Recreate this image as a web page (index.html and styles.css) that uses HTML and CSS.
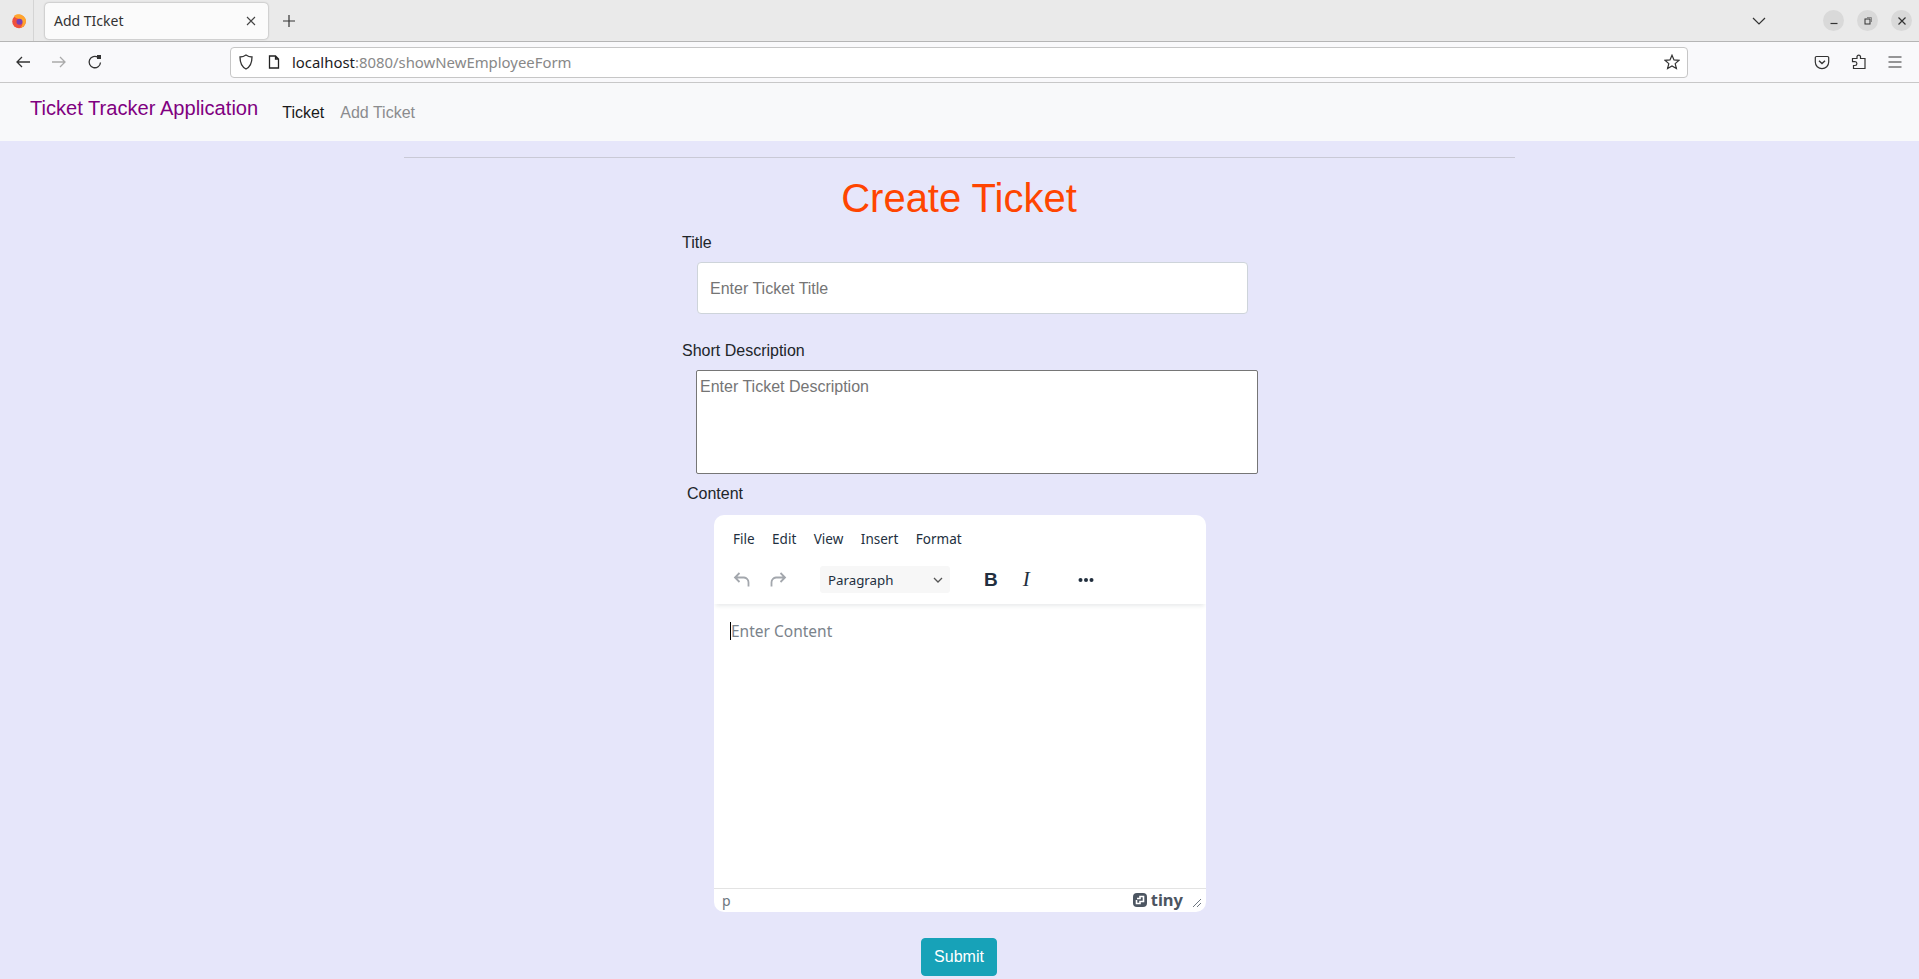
FILE: index.html
```html
<!DOCTYPE html>
<html lang="en">
<head>
    <meta charset="UTF-8">
    <meta name="viewport" content="width=device-width, initial-scale=1.0">
    <title>Add TIcket</title>
    <link rel="stylesheet" href="styles.css">
</head>
<body>
    <!-- Browser chrome -->
    <div class="tabstrip">
        <div class="tab-logo">
            <svg width="16" height="16" viewBox="0 0 16 16"><circle cx="8" cy="8.5" r="6.8" fill="#f0503c"/><path d="M3 3 C6 0 13 1 15 7 C15 11 13 14 9 15 C13 12 12 7 8 6 C6 5.500 4 5 3 3Z" fill="#ffa52e"/><circle cx="8.500" cy="8.800" r="3" fill="#7a3fb5"/></svg>
        </div>
        <div class="tab">
            <span class="tab-title">Add TIcket</span>
            <svg class="tab-close" width="10" height="10" viewBox="0 0 10 10"><path d="M1 1 L9 9 M9 1 L1 9" stroke="#444" stroke-width="1.100" fill="none"/></svg>
        </div>
        <svg class="tab-new" width="14" height="14" viewBox="0 0 14 14"><path d="M7 1 V13 M1 7 H13" stroke="#333" stroke-width="1.200" fill="none"/></svg>
        <div class="tabstrip-right">
            <svg class="tab-list" width="14" height="8" viewBox="0 0 14 8"><path d="M1 1 L7 7 L13 1" stroke="#333" stroke-width="1.200" fill="none"/></svg>
            <div class="win-btn"><svg width="10" height="10" viewBox="0 0 10 10"><path d="M1.500 7.500 H8.500" stroke="#333" stroke-width="1.200"/></svg></div>
            <div class="win-btn"><svg width="10" height="10" viewBox="0 0 10 10"><rect x="2" y="3" width="5" height="5" stroke="#333" fill="none"/><path d="M4 1.500 H8.500 V6" stroke="#888" fill="none"/></svg></div>
            <div class="win-btn"><svg width="10" height="10" viewBox="0 0 10 10"><path d="M1.500 1.500 L8.500 8.500 M8.500 1.500 L1.500 8.500" stroke="#333" stroke-width="1.200"/></svg></div>
        </div>
    </div>
    <div class="toolbar">
        <svg class="tool-icon" width="16" height="16" viewBox="0 0 16 16"><path d="M15 8 H2 M7 3 L2 8 L7 13" stroke="#333" stroke-width="1.300" fill="none"/></svg>
        <svg class="tool-icon" width="16" height="16" viewBox="0 0 16 16"><path d="M1 8 H14 M9 3 L14 8 L9 13" stroke="#aaa" stroke-width="1.300" fill="none"/></svg>
        <svg class="tool-icon" width="16" height="16" viewBox="0 0 16 16"><path d="M13.500 8.500 A5.700 5.700 0 1 1 11 3.300" stroke="#333" stroke-width="1.300" fill="none"/><path d="M10 1 H14 V5 H10Z" fill="#333"/></svg>
        <div class="urlbar">
            <svg width="14" height="16" viewBox="0 0 14 16"><path d="M7 1 C9 2.500 11 3 13 3 C13 9 11 13 7 15 C3 13 1 9 1 3 C3 3 5 2.500 7 1Z" stroke="#333" stroke-width="1.300" fill="none"/></svg>
            <svg class="url-page" width="12" height="14" viewBox="0 0 12 14"><path d="M1.500 1 H7.500 L10.500 4 V13 H1.500Z M7.500 1 V4 H10.500" stroke="#222" stroke-width="1.300" fill="none"/></svg>
            <span class="url-text"><span class="url-host">localhost</span>:8080/showNewEmployeeForm</span>
            <svg class="url-star" width="16" height="16" viewBox="0 0 16 16"><path d="M8 1.200 L10 5.900 L15 6.300 L11.200 9.600 L12.400 14.600 L8 11.900 L3.600 14.600 L4.800 9.600 L1 6.300 L6 5.900Z" stroke="#333" stroke-width="1.200" fill="none"/></svg>
        </div>
        <div class="tool-right">
            <svg width="16" height="15" viewBox="0 0 16 15"><path d="M2.500 1.500 H13.500 A1.200 1.200 0 0 1 14.700 2.700 V7 A6.700 6.700 0 0 1 1.300 7 V2.700 A1.200 1.200 0 0 1 2.500 1.500Z" stroke="#333" stroke-width="1.200" fill="none"/><path d="M5 5.800 L8 8.500 L11 5.800" stroke="#333" stroke-width="1.400" fill="none"/></svg>
            <svg width="16" height="16" viewBox="0 0 16 16"><path d="M6 2.500 A1.800 1.800 0 0 1 9.500 2.500 V4.500 H14 V14.500 H2.500 V11.500 H4 A1.900 1.900 0 0 0 4 7.700 H1.500 V4.500 H6Z" stroke="#333" stroke-width="1.200" fill="none"/></svg>
            <svg width="14" height="12" viewBox="0 0 14 12"><path d="M0.500 1 H13.500 M0.500 6 H13.500 M0.500 11 H13.500" stroke="#333" stroke-width="1.200"/></svg>
        </div>
    </div>

    <!-- Page -->
    <nav class="navbar">
        <a class="brand" href="#">Ticket Tracker Application</a>
        <a class="nav-link active" href="#">Ticket</a>
        <a class="nav-link" href="#">Add Ticket</a>
    </nav>
    <main class="container">
        <hr class="divider">
        <h1 class="page-title">Create Ticket</h1>
        <form class="ticket-form">
            <div class="fields">
                <label class="lbl">Title</label>
                <input class="title-input" type="text" placeholder="Enter Ticket Title">
                <label class="lbl lbl-desc">Short Description</label>
                <textarea class="desc-input" placeholder="Enter Ticket Description"></textarea>
                <label class="lbl lbl-content">Content</label>
                <div class="editor">
                    <div class="menubar">
                        <span>File</span><span>Edit</span><span>View</span><span>Insert</span><span>Format</span>
                    </div>
                    <div class="editor-tools">
                        <svg class="undo" width="20" height="20" viewBox="0 0 20 20"><path d="M7.500 3 L3 7.500 L7.500 12 M3.500 7.500 H12 A5 5 0 0 1 16.500 12.500 V16.500" stroke="#a3a7ad" stroke-width="1.800" fill="none"/></svg>
                        <svg class="redo" width="20" height="20" viewBox="0 0 20 20"><path d="M12.500 3 L17 7.500 L12.500 12 M16.500 7.500 H8 A5 5 0 0 0 3.500 12.500 V16.500" stroke="#a3a7ad" stroke-width="1.800" fill="none"/></svg>
                        <div class="block-select">
                            <span>Paragraph</span>
                            <svg width="10" height="6" viewBox="0 0 10 6"><path d="M1 1 L5 5 L9 1" stroke="#555" stroke-width="1.300" fill="none"/></svg>
                        </div>
                        <span class="tool-bold">B</span>
                        <span class="tool-italic">I</span>
                        <svg class="tool-more" width="16" height="4" viewBox="0 0 16 4"><circle cx="2.500" cy="2" r="2" fill="#222f3e"/><circle cx="8" cy="2" r="2" fill="#222f3e"/><circle cx="13.500" cy="2" r="2" fill="#222f3e"/></svg>
                    </div>
                    <div class="editor-body">
                        <span class="caret"></span><span class="editor-placeholder">Enter Content</span>
                    </div>
                    <div class="statusbar">
                        <span class="path">p</span>
                        <svg class="tiny-logo" width="16" height="16" viewBox="0 0 16 16"><path d="M5 1 H11 A4 4 0 0 1 15 5 V11 A4 4 0 0 1 11 15 H5 A4 4 0 0 1 1 11 V5 A4 4 0 0 1 5 1Z" fill="#4c5561"/><path d="M5 6.500 H8 V4.500 H11.500 V9.500 H8 V11.500 H4.500 V8" stroke="#fff" stroke-width="1.600" fill="none"/></svg>
                        <span class="tiny-word">tiny</span>
                        <svg class="resize" width="10" height="10" viewBox="0 0 10 10"><path d="M1 9 L9 1 M5 9 L9 5" stroke="#6d7680" stroke-width="1"/></svg>
                    </div>
                </div>
            </div>
            <button class="submit-btn" type="button">Submit</button>
        </form>
    </main>
</body>
</html>
```

FILE: styles.css
```css
html, body {
    margin: 0;
    height: 979px;
    overflow: hidden;
}
body {
    background-color: #e6e6fa;
    font-family: "Liberation Sans", Arial, sans-serif;
    color: #212529;
}
svg {
    display: block;
    flex: none;
}

/* browser chrome */
.tabstrip {
    height: 41px;
    background-color: #eaeaea;
    border-bottom: 1px solid #b5b5b5;
    display: flex;
    align-items: center;
    font-family: "Noto Sans", sans-serif;
}
.tab-logo {
    width: 34px;
    height: 41px;
    border-right: 1px solid #d4d4d4;
    display: flex;
    align-items: center;
    padding-left: 11px;
    box-sizing: border-box;
}
.tab {
    width: 223px;
    height: 36px;
    margin-left: 11px;
    background-color: #fbfbfb;
    border-radius: 4px;
    box-shadow: 0 0 2px rgba(0, 0, 0, 0.4);
    display: flex;
    align-items: center;
    justify-content: space-between;
    padding: 0 12px 0 9px;
    box-sizing: border-box;
}
.tab-title {
    font-size: 14px;
    color: #333;
}
.tab-new {
    margin-left: 14px;
}
.tabstrip-right {
    margin-left: auto;
    display: flex;
    align-items: center;
    padding-right: 7px;
}
.tab-list {
    margin-right: 44px;
}
.win-btn {
    width: 21px;
    height: 21px;
    border-radius: 50%;
    background-color: #d9d9d9;
    display: flex;
    align-items: center;
    justify-content: center;
    margin-left: 13px;
}
.toolbar {
    height: 40px;
    background-color: #f9f9fb;
    border-bottom: 1px solid #c8c8c8;
    display: flex;
    align-items: center;
    padding-left: 15px;
}
.tool-icon {
    margin-right: 20px;
}
.urlbar {
    width: 1458px;
    height: 31px;
    margin-left: 107px;
    box-sizing: border-box;
    background-color: #fff;
    border: 1px solid #c6c6c6;
    border-radius: 4px;
    display: flex;
    align-items: center;
    padding: 0 7px 0 8px;
}
.url-page {
    margin-left: 15px;
}
.url-text {
    margin-left: 12px;
    font-family: "Noto Sans", sans-serif;
    font-size: 14.9px;
    color: #888;
}
.url-host {
    color: #1c1b22;
}
.url-star {
    margin-left: auto;
}
.tool-right {
    margin-left: auto;
    display: flex;
    align-items: center;
    gap: 21px;
    padding-right: 17px;
}

/* page */
.navbar {
    height: 58px;
    background-color: #f8f9fa;
    display: flex;
    align-items: center;
    padding-left: 30px;
}
.brand {
    font-size: 20.1px;
    color: #800080;
    text-decoration: none;
    margin-right: 24px;
    margin-bottom: 8px;
}
.nav-link {
    font-size: 16px;
    color: #8b8c8e;
    text-decoration: none;
    margin-right: 16px;
    margin-top: 2px;
}
.nav-link.active {
    color: #1a1a1a;
}
.container {
    width: 1111px;
    margin: 0 auto;
    padding-top: 16px;
}
.divider {
    margin: 0;
    border: 0;
    border-top: 1px solid #c9c9d6;
}
.page-title {
    margin: 16px 0 0;
    padding-right: 1px;
    text-align: center;
    font-size: 40px;
    font-weight: 400;
    line-height: 48px;
    color: #ff4500;
}
.ticket-form {
    width: 709px;
    margin: 0 auto;
    display: flex;
    flex-direction: column;
}
.fields {
    display: flex;
    flex-direction: column;
    align-items: flex-start;
    padding-left: 77px;
}
.lbl {
    font-size: 16px;
    line-height: 24px;
    margin-top: 9px;
}
.title-input {
    width: 551px;
    height: 52px;
    box-sizing: border-box;
    margin: 7px 0 0 15px;
    padding: 8px 12px 6px;
    font-family: inherit;
    font-size: 16px;
    border: 1px solid #ced4da;
    border-radius: 4px;
    background-color: #fff;
}
.title-input::placeholder,
.desc-input::placeholder {
    color: #757575;
    opacity: 1;
}
.lbl-desc {
    margin-top: 25px;
}
.desc-input {
    width: 562px;
    height: 104px;
    box-sizing: border-box;
    margin: 7px 0 0 14px;
    padding: 4px 3px 2px;
    font-family: inherit;
    font-size: 16px;
    line-height: 24px;
    border: 1px solid #767676;
    border-radius: 2px;
    resize: none;
    display: block;
}
.lbl-content {
    margin: 8px 0 0 5px;
}
.editor {
    width: 492px;
    height: 397px;
    margin: 9px 0 0 32px;
    background-color: #fff;
    border-radius: 10px;
    display: flex;
    flex-direction: column;
    overflow: hidden;
    font-family: "Noto Sans", sans-serif;
    color: #222f3e;
}
.menubar {
    display: flex;
    gap: 17.5px;
    height: 48px;
    align-items: center;
    padding: 0 0 0 19px;
    font-size: 13.5px;
}
.editor-tools {
    height: 41px;
    box-sizing: border-box;
    padding: 0 0 8px 18px;
    display: flex;
    align-items: center;
    box-shadow: 0 4px 4px -2px rgba(34, 47, 62, 0.1);
    position: relative;
}
.redo {
    margin-left: 16px;
}
.block-select {
    width: 130px;
    height: 27px;
    margin-left: 32px;
    background-color: #f7f7f7;
    border-radius: 3px;
    display: flex;
    align-items: center;
    justify-content: space-between;
    padding: 0 7px 0 8px;
    box-sizing: border-box;
    font-size: 13.3px;
}
.tool-bold {
    margin-left: 34px;
    font-family: "Liberation Sans", sans-serif;
    font-weight: 700;
    font-size: 19px;
}
.tool-italic {
    margin-left: 25px;
    font-family: "Liberation Serif", serif;
    font-style: italic;
    font-size: 21px;
}
.tool-more {
    margin-left: 48px;
}
.editor-body {
    flex: 1;
    display: flex;
    align-items: flex-start;
    padding: 16px 0 0 16px;
}
.caret {
    width: 1px;
    height: 18px;
    background-color: #000;
    margin-top: 2px;
}
.editor-placeholder {
    font-size: 15.5px;
    line-height: 22px;
    color: #7b838b;
}
.statusbar {
    height: 24px;
    box-sizing: border-box;
    border-top: 1px solid #e3e3e3;
    display: flex;
    align-items: center;
    padding: 0 4px 1px 8px;
}
.path {
    font-size: 14px;
    color: #6d7680;
    margin-right: auto;
}
.tiny-word {
    margin-left: 3px;
    font-size: 16.5px;
    font-weight: 700;
    color: #4c5561;
    line-height: 20px;
}
.resize {
    margin-left: 9px;
    margin-top: 6px;
}
.submit-btn {
    align-self: center;
    margin: 26px 1px 0 0;
    width: 76px;
    height: 38px;
    background-color: #17a2b8;
    border: 1px solid #17a2b8;
    border-radius: 4px;
    color: #fff;
    font-family: inherit;
    font-size: 16px;
}
```
